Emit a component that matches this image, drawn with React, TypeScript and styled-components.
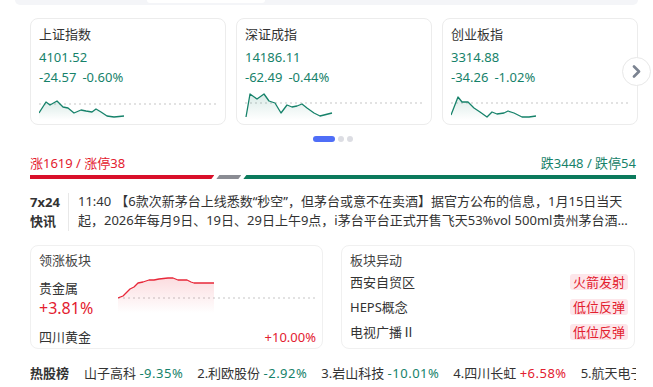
import styled, { createGlobalStyle } from "styled-components";

const RED = "#e3202f";
const GREEN = "#16826a";

const GlobalStyle = createGlobalStyle`
  body {
    margin: 0;
    background: #fff;
    color: #333;
    font-family: "Noto Sans", "Noto Sans CJK SC", sans-serif;
  }
`;

type Pt = [number, number];

const indices: { name: string; value: string; change: string; pct: string; pts: Pt[]; base: number }[] = [
  {
    name: "上证指数",
    value: "4101.52",
    change: "-24.57",
    pct: "-0.60%",
    base: 12,
    pts: [[0, 21], [7, 10], [11, 13], [18, 9], [24, 15], [29, 16], [35, 21], [42, 18], [47, 19], [53, 20], [57, 17], [62, 20], [68, 24], [75, 25], [85, 24]],
  },
  {
    name: "深证成指",
    value: "14186.11",
    change: "-62.49",
    pct: "-0.44%",
    base: 11,
    pts: [[1, 25], [5, 2], [12, 7], [19, 2], [24, 9], [30, 11], [36, 21], [42, 13], [47, 15], [52, 14], [57, 12], [62, 16], [69, 21], [75, 24], [87, 21]],
  },
  {
    name: "创业板指",
    value: "3314.88",
    change: "-34.26",
    pct: "-1.02%",
    base: 11,
    pts: [[0, 23], [7, 5], [11, 10], [17, 10], [23, 16], [29, 20], [36, 25], [41, 20], [46, 22], [53, 21], [57, 19], [63, 21], [71, 25], [78, 25], [85, 24]],
  },
];

const leaderPts: Pt[] = [
  [0, 25], [5, 23], [8, 20], [12, 16], [16, 14], [20, 10], [25, 9], [31, 7], [36, 7], [41, 6], [50, 5], [55, 5],
  [60, 7], [65, 7], [69, 7], [73, 9], [76, 10], [83, 10], [96, 10],
];

const movers = [
  { name: "西安自贸区", tag: "火箭发射" },
  { name: "HEPS概念", tag: "低位反弹" },
  { name: "电视广播Ⅱ", tag: "低位反弹" },
];

const hot = [
  { name: "山子高科", pct: "-9.35%" },
  { name: "2.利欧股份", pct: "-2.92%" },
  { name: "3.岩山科技", pct: "-10.01%" },
  { name: "4.四川长虹", pct: "+6.58%" },
  { name: "5.航天电子", pct: "+3.12%" },
];

function Sparkline(props: { id: string; pts: Pt[]; base: number; color: string; width: number; height: number; bottom: number; fillTop: number }) {
  const line = props.pts.map((p) => p.join(",")).join(" ");
  const last = props.pts[props.pts.length - 1];
  const area = `${props.pts[0][0]},${props.bottom} ${line} ${last[0]},${props.bottom}`;
  return (
    <svg width={props.width} height={props.height}>
      <defs>
        <linearGradient id={props.id} x1="0" y1="0" x2="0" y2="1">
          <stop offset="0" stopColor={props.color} stopOpacity={props.fillTop} />
          <stop offset="1" stopColor={props.color} stopOpacity={0} />
        </linearGradient>
      </defs>
      <line x1={0} x2={props.width} y1={props.base} y2={props.base} stroke="#e2e2e2" strokeWidth={2} strokeDasharray="2 3" />
      <polygon points={area} fill={`url(#${props.id})`} />
      <polyline points={line} fill="none" stroke={props.color} strokeWidth={1.3} strokeLinejoin="round" />
    </svg>
  );
}

export default function App() {
  return (
    <>
      <GlobalStyle />
      <TopBar>
        <TopTab />
      </TopBar>
      <Page>
        <Carousel>
          <Cards>
            {indices.map((ix, i) => (
              <Card key={ix.name}>
                <CardTitle>{ix.name}</CardTitle>
                <CardValue>{ix.value}</CardValue>
                <CardChange>
                  <span>{ix.change}</span>
                  <span>{ix.pct}</span>
                </CardChange>
                <ChartBox>
                  <Sparkline id={`g${i}`} pts={ix.pts} base={ix.base} color={GREEN} width={179} height={28} bottom={28} fillTop={0.16} />
                </ChartBox>
              </Card>
            ))}
          </Cards>
          <NextButton>
            <svg width="9" height="13" viewBox="0 0 9 13">
              <path d="M2 1.5 L7 6.5 L2 11.5" fill="none" stroke="#7b8391" strokeWidth="2.6" strokeLinecap="round" strokeLinejoin="round" />
            </svg>
          </NextButton>
        </Carousel>

        <Dots>
          <Dot $active />
          <Dot />
          <Dot />
        </Dots>

        <BreadthRow>
          <BreadthText $color={RED}>涨1619 / 涨停38</BreadthText>
          <BreadthText $color={GREEN}>跌3448 / 跌停54</BreadthText>
        </BreadthRow>
        <BreadthBar>
          <Seg $grow={1619} $color="#d9102a" $clip="polygon(0 0, 100% 0, calc(100% - 3px) 100%, 0 100%)" />
          <Seg $grow={220} $color="#8a8c93" $clip="polygon(3px 0, 100% 0, calc(100% - 3px) 100%, 0 100%)" />
          <Seg $grow={3448} $color="#0b7a5c" $clip="polygon(3px 0, 100% 0, 100% 100%, 0 100%)" />
        </BreadthBar>

        <News>
          <NewsLabel>
            <span>7x24</span>
            <span>快讯</span>
          </NewsLabel>
          <NewsText>
            <NewsTime>11:40</NewsTime>【6款次新茅台上线悉数“秒空”，但茅台或意不在卖酒】据官方公布的信息，1月15日当天起，2026年每月9日、19日、29日上午9点，i茅台平台正式开售飞天53%vol 500ml贵州茅台酒（1:1飞天茅台），单瓶零售价为1499元。
          </NewsText>
        </News>

        <Panels>
          <Panel>
            <PanelTitle>领涨板块</PanelTitle>
            <LeaderRow>
              <LeaderInfo>
                <LeaderName>贵金属</LeaderName>
                <LeaderPct>+3.81%</LeaderPct>
              </LeaderInfo>
              <Sparkline id="lead" pts={leaderPts} base={25} color="#e8283a" width={200} height={42} bottom={40} fillTop={0.16} />
            </LeaderRow>
            <LeaderStock>
              <span>四川黄金</span>
              <RedText>+10.00%</RedText>
            </LeaderStock>
          </Panel>
          <Panel>
            <PanelTitle>板块异动</PanelTitle>
            {movers.map((m) => (
              <MoverRow key={m.name}>
                <span>{m.name}</span>
                <Tag>{m.tag}</Tag>
              </MoverRow>
            ))}
          </Panel>
        </Panels>

        <HotRow>
          <HotLabel>热股榜</HotLabel>
          {hot.map((h) => (
            <HotItem key={h.name}>
              {h.name} <Pct $up={h.pct.startsWith("+")}>{h.pct}</Pct>
            </HotItem>
          ))}
        </HotRow>
      </Page>
    </>
  );
}

const TopBar = styled.div`
  height: 5px;
  margin: 0 15px;
  background: #f4f5f8;
  border-radius: 0 0 8px 8px;
`;

const TopTab = styled.div`
  width: 118px;
  height: 3px;
  margin-left: 132px;
  background: #fff;
  border-radius: 0 0 6px 6px;
`;

const Page = styled.div`
  width: 606px;
  padding-left: 30px;
`;

const Carousel = styled.div`
  position: relative;
  margin-top: 13px;
`;

const Cards = styled.div`
  display: grid;
  grid-template-columns: repeat(3, 1fr);
  gap: 10px;
`;

const Card = styled.div`
  height: 107px;
  box-sizing: border-box;
  padding: 6px 7px 4px 8px;
  border: 1px solid #ececec;
  border-radius: 8px;
  display: flex;
  flex-direction: column;
`;

const CardTitle = styled.div`
  font-size: 13px;
  line-height: 18px;
  color: #333;
`;

const CardValue = styled.div`
  margin-top: 5px;
  font-size: 13px;
  line-height: 18px;
  color: ${GREEN};
`;

const CardChange = styled.div`
  margin-top: 2px;
  display: flex;
  gap: 6px;
  font-size: 13px;
  line-height: 18px;
  color: ${GREEN};
`;

const ChartBox = styled.div`
  margin-top: 6px;
  height: 28px;
  svg {
    display: block;
  }
`;

const NextButton = styled.div`
  position: absolute;
  right: -15px;
  top: 39px;
  width: 29px;
  height: 29px;
  box-sizing: border-box;
  border: 1px solid #e8e8e8;
  border-radius: 50%;
  background: #fff;
  display: flex;
  align-items: center;
  justify-content: center;
`;

const Dots = styled.div`
  margin-top: 11px;
  height: 6px;
  display: flex;
  justify-content: center;
  gap: 3px;
`;

const Dot = styled.span<{ $active?: boolean }>`
  width: ${(p) => (p.$active ? "22px" : "6px")};
  height: 6px;
  border-radius: 3px;
  background: ${(p) => (p.$active ? "#4f6ef7" : "#dcdde3")};
`;

const BreadthRow = styled.div`
  margin-top: 12px;
  display: flex;
  justify-content: space-between;
`;

const BreadthText = styled.span<{ $color: string }>`
  font-size: 13px;
  line-height: 18px;
  color: ${(p) => p.$color};
`;

const BreadthBar = styled.div`
  margin-top: 3px;
  display: flex;
  gap: 2px;
`;

const Seg = styled.div<{ $grow: number; $color: string; $clip: string }>`
  flex: ${(p) => p.$grow} 1 0;
  height: 4px;
  background: ${(p) => p.$color};
  clip-path: ${(p) => p.$clip};
`;

const News = styled.div`
  margin-top: 13px;
  display: flex;
  align-items: flex-start;
`;

const NewsLabel = styled.div`
  width: 38px;
  flex: none;
  display: flex;
  flex-direction: column;
  font-size: 13px;
  font-weight: 700;
  line-height: 19px;
  color: #333;
  border-right: 1px solid #e8e8e8;
  margin-top: 1px;
`;

const NewsText = styled.div`
  flex: 1;
  padding-left: 9px;
  font-size: 13px;
  line-height: 19px;
  color: #333;
  display: -webkit-box;
  -webkit-line-clamp: 2;
  -webkit-box-orient: vertical;
  overflow: hidden;
`;

const NewsTime = styled.span`
  margin-right: 4px;
`;

const Panels = styled.div`
  margin-top: 14px;
  display: grid;
  grid-template-columns: 293px 294px;
  column-gap: 18px;
`;

const Panel = styled.div`
  height: 104px;
  box-sizing: border-box;
  padding: 5px 6px 0 8px;
  border: 1px solid #f0f0f0;
  border-radius: 8px;
`;

const PanelTitle = styled.div`
  font-size: 13px;
  line-height: 18px;
  color: #444;
`;

const LeaderRow = styled.div`
  margin-top: 4px;
  display: flex;
  svg {
    display: block;
  }
`;

const LeaderInfo = styled.div`
  width: 79px;
  flex: none;
  padding-top: 5px;
`;

const LeaderName = styled.div`
  font-size: 13px;
  line-height: 20px;
  color: #333;
`;

const LeaderPct = styled.div`
  font-size: 16px;
  line-height: 20px;
  color: ${RED};
`;

const LeaderStock = styled.div`
  margin-top: 10px;
  display: flex;
  justify-content: space-between;
  font-size: 13px;
  line-height: 18px;
  color: #333;
`;

const RedText = styled.span`
  color: ${RED};
`;

const MoverRow = styled.div`
  height: 25px;
  display: flex;
  align-items: center;
  justify-content: space-between;
  font-size: 13px;
  color: #333;
  &:first-of-type {
    margin-top: 3px;
  }
`;

const Tag = styled.span`
  height: 16px;
  line-height: 16px;
  padding: 0 3px;
  border-radius: 3px;
  background: #fde6ea;
  color: ${RED};
  font-size: 13px;
`;

const HotRow = styled.div`
  margin-top: 15px;
  display: flex;
  gap: 14px;
  white-space: nowrap;
  overflow: hidden;
  font-size: 13px;
  line-height: 18px;
  color: #333;
`;

const HotLabel = styled.span`
  font-weight: 700;
  margin-right: 1px;
`;

const HotItem = styled.span``;

const Pct = styled.span<{ $up: boolean }>`
  letter-spacing: 0.5px;
  color: ${(p) => (p.$up ? RED : GREEN)};
`;
